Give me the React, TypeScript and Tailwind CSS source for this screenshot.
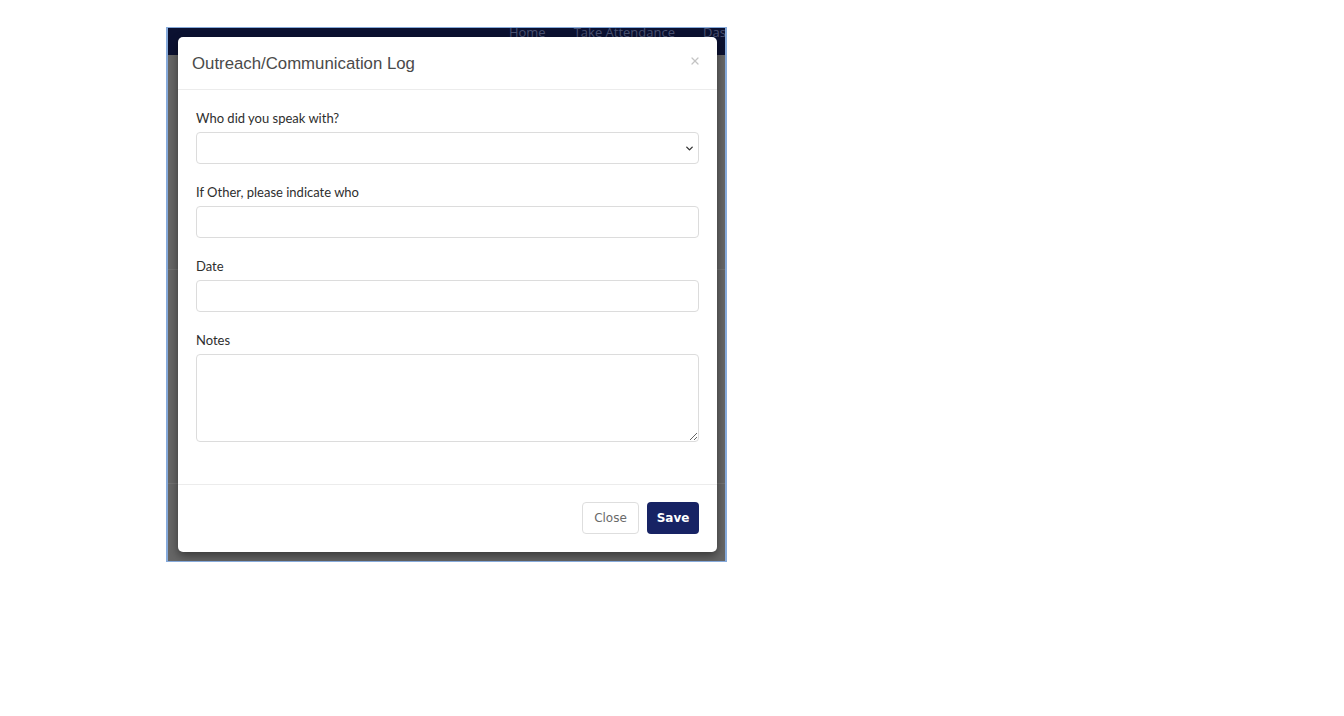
import React from 'react';
import { ChevronDown, X } from 'lucide-react';

const labelCls = 'block text-[13px] leading-4 text-[#2e2e2e] mb-[6px]';
const fieldCls = 'block w-full h-8 rounded-[4px] border border-[#dcdcdc] bg-white px-3 text-[13px] outline-none';

const Field: React.FC<{ label: string; children: React.ReactNode }> = ({ label, children }) => (
  <div className="mb-5">
    <label className={labelCls}>{label}</label>
    {children}
  </div>
);

export default function App() {
  return (
    <div className="min-h-[716px] bg-white pl-[166px] pt-[27px] font-['Lato',sans-serif]">
      <div className="relative w-[561px] h-[535px] border-x-2 border-y border-[#86aadb] overflow-hidden">
        {/* page behind the dialog, dimmed */}
        <div className="flex flex-col h-full">
          <div className="h-[27px] bg-[#0b1131] flex items-start justify-end gap-7 text-[13px] leading-4 text-[#4a5272] font-['Open_Sans',sans-serif]">
            <span className="mt-[-4px]">Home</span>
            <span className="mt-[-4px]">Take Attendance</span>
            <span className="mt-[-4px] w-[22px]">Das</span>
          </div>
          <div className="h-[215px] bg-[#666] border-b border-[#727272]" />
          <div className="h-[214px] bg-[#666] border-b border-[#727272]" />
          <div className="flex-1 bg-[#666]" />
        </div>

        {/* modal */}
        <div className="absolute left-[10px] top-[9px] w-[539px] h-[515px] rounded-[5px] bg-white shadow-[0_4px_10px_rgba(0,0,0,0.45)] flex flex-col">
          <div className="h-[53px] flex items-center justify-between pl-[14px] pr-[16px] border-b border-[#ececec]">
            <h4 className="text-[16.8px] text-[#4a4a4a] font-['Liberation_Sans',sans-serif] mt-[1px]">Outreach/Communication Log</h4>
            <X className="w-3 h-3 text-[#c4c4c4] mt-[-4px]" strokeWidth={2.5} />
          </div>

          <div className="flex-1 px-[18px] pt-[20px]">
            <Field label="Who did you speak with?">
              <div className="relative">
                <select className={fieldCls + ' appearance-none'} defaultValue="">
                  <option value=""></option>
                </select>
                <ChevronDown className="absolute right-[4px] top-[11px] w-[11px] h-[11px] text-[#333]" strokeWidth={3} />
              </div>
            </Field>
            <Field label="If Other, please indicate who">
              <input type="text" className={fieldCls} />
            </Field>
            <Field label="Date">
              <input type="text" className={fieldCls} />
            </Field>
            <Field label="Notes">
              <textarea className="block w-full h-[88px] rounded-[4px] border border-[#dcdcdc] bg-white px-3 py-2 text-[13px] outline-none resize-y" />
            </Field>
          </div>

          <div className="h-[68px] border-t border-[#ececec] flex items-start justify-end gap-2 pt-[17px] pr-[18px] font-['DejaVu_Sans',sans-serif]">
            <button className="h-8 w-[57px] rounded-[4px] border border-[#dedede] bg-white text-[12px] text-[#6a6a6a]">Close</button>
            <button className="h-8 w-[52px] rounded-[4px] bg-[#172364] text-[12px] font-bold text-white">Save</button>
          </div>
        </div>
      </div>
    </div>
  );
}
